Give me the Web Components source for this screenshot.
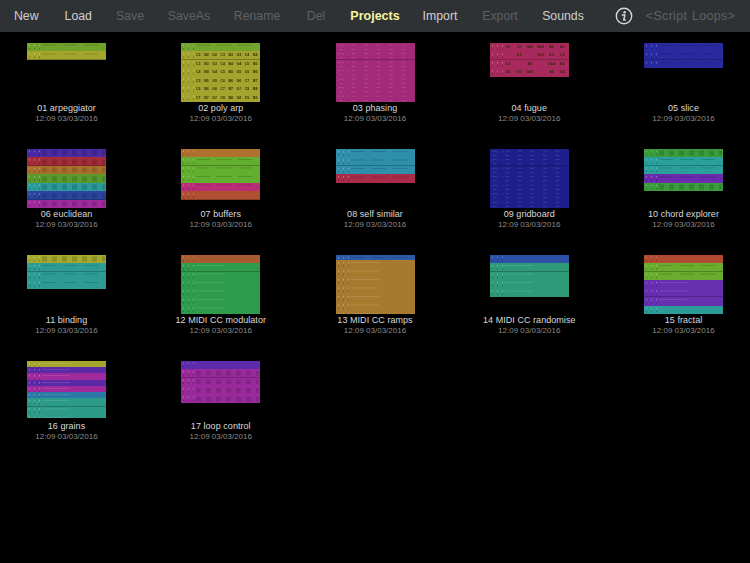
<!DOCTYPE html>
<html>
<head>
<meta charset="utf-8">
<title>Projects</title>
<style>
  html, body { margin: 0; height: 100%; background: #000; overflow: hidden; }
  body { font-family: "Liberation Sans", Arial, sans-serif; }
</style>
</head>
<body>
<tool-bar>
  <nav-button w="52.5">New</nav-button>
  <nav-button w="51.5">Load</nav-button>
  <nav-button w="52" off>Save</nav-button>
  <nav-button w="66" off>SaveAs</nav-button>
  <nav-button w="70" off>Rename</nav-button>
  <nav-button w="48" off>Del</nav-button>
  <nav-button w="70" on>Projects</nav-button>
  <nav-button w="60">Import</nav-button>
  <nav-button w="60" off>Export</nav-button>
  <nav-button w="66">Sounds</nav-button>
  <nav-button w="56"><info-icon></info-icon></nav-button>
  <nav-button w="29" off big>&lt;Script</nav-button>
  <nav-button w="65" off big>Loops&gt;</nav-button>
</tool-bar>
<project-grid>
  <project-card name="01 arpeggiator">
    <thumb-band color="#6fa32c" rows="1" pattern="dash"></thumb-band>
    <thumb-band color="#a3a52c" rows="1" pattern="dash"></thumb-band>
  </project-card>
  <project-card name="02 poly arp">
    <thumb-band color="#72a52e" rows="1" pattern="dash"></thumb-band>
    <thumb-band color="#a3a32e" rows="6" notes="C2 B2 G2 C3 B3 G3 C4 B4 C3 B3 G3 C4 B4 G4 C5 B5 C4 B4 G4 C5 B5 G5 C6 B6 C5 B5 G5 C6 B6 G6 C7 B7 C6 B6 G6 C7 B7 G7 C8 B8 C7 B7 G7 C8 B8 G8 C9 B9"></thumb-band>
  </project-card>
  <project-card name="03 phasing">
    <thumb-band color="#a32a78" rows="7" pattern="beads"></thumb-band>
  </project-card>
  <project-card name="04 fugue">
    <thumb-band color="#a82a5c" rows="4" notes="G1 C2 Gb2 Gb2 A2 A2 &nbsp; G3 &nbsp; Gb3 E3 C3 C4 &nbsp; A4 &nbsp; Gb4 E4 D5 G5 Gb5 &nbsp; A5 G5"></thumb-band>
  </project-card>
  <project-card name="05 slice">
    <thumb-band color="#2a2aa0" rows="3" pattern="dash"></thumb-band>
  </project-card>

  <project-card name="06 euclidean">
    <thumb-band color="#4a2aa3" rows="1" pattern="blocks"></thumb-band>
    <thumb-band color="#a52c38" rows="1" pattern="blocks"></thumb-band>
    <thumb-band color="#a8702c" rows="1" pattern="blocks"></thumb-band>
    <thumb-band color="#5a9a2c" rows="1" pattern="blocks"></thumb-band>
    <thumb-band color="#2a9a9a" rows="1" pattern="blocks"></thumb-band>
    <thumb-band color="#2a44a0" rows="1" pattern="blocks"></thumb-band>
    <thumb-band color="#a02a9c" rows="1" pattern="blocks"></thumb-band>
  </project-card>
  <project-card name="07 buffers">
    <thumb-band color="#b0702e" rows="1"></thumb-band>
    <thumb-band color="#62ae2e" rows="3" pattern="dash"></thumb-band>
    <thumb-band color="#b82c78" rows="1" pattern="dash"></thumb-band>
    <thumb-band color="#b05032" rows="1"></thumb-band>
  </project-card>
  <project-card name="08 self similar">
    <thumb-band color="#2f8eaa" rows="3" pattern="dash"></thumb-band>
    <thumb-band color="#a82c48" rows="1" pattern="dash"></thumb-band>
  </project-card>
  <project-card name="09 gridboard">
    <thumb-band color="#1e1e8c" rows="7" pattern="beads"></thumb-band>
  </project-card>
  <project-card name="10 chord explorer">
    <thumb-band color="#3a9c3c" rows="1" pattern="blocks"></thumb-band>
    <thumb-band color="#2aa09c" rows="2" pattern="dash"></thumb-band>
    <thumb-band color="#6c2aac" rows="1" pattern="dash"></thumb-band>
    <thumb-band color="#3a9c3c" rows="1" pattern="blocks"></thumb-band>
  </project-card>

  <project-card name="11 binding">
    <thumb-band color="#a6a82e" rows="1" pattern="blocks"></thumb-band>
    <thumb-band color="#2c9c94" rows="3" pattern="dash"></thumb-band>
  </project-card>
  <project-card name="12 MIDI CC modulator">
    <thumb-band color="#a85a30" rows="1"></thumb-band>
    <thumb-band color="#2e9c4c" rows="6" pattern="short"></thumb-band>
  </project-card>
  <project-card name="13 MIDI CC ramps">
    <thumb-band color="#2c5ca6" rows="0.7" pattern="dash"></thumb-band>
    <thumb-band color="#a87a30" rows="6.3" pattern="short"></thumb-band>
  </project-card>
  <project-card name="14 MIDI CC randomise">
    <thumb-band color="#2c50a6" rows="1"></thumb-band>
    <thumb-band color="#2e9a78" rows="4" pattern="short"></thumb-band>
  </project-card>
  <project-card name="15 fractal">
    <thumb-band color="#b04a30" rows="1"></thumb-band>
    <thumb-band color="#6aac2e" rows="2" pattern="dash"></thumb-band>
    <thumb-band color="#6630b0" rows="3" pattern="short"></thumb-band>
    <thumb-band color="#2c9c98" rows="1"></thumb-band>
  </project-card>

  <project-card name="16 grains">
    <thumb-band color="#a6a62e" rows="0.75" pattern="short"></thumb-band>
    <thumb-band color="#5a2aa6" rows="0.75" pattern="short"></thumb-band>
    <thumb-band color="#a02a9c" rows="0.75" pattern="short"></thumb-band>
    <thumb-band color="#5a2aa6" rows="0.75" pattern="short"></thumb-band>
    <thumb-band color="#a02a9c" rows="0.75" pattern="short"></thumb-band>
    <thumb-band color="#2c78a6" rows="0.7" pattern="short"></thumb-band>
    <thumb-band color="#2c9c88" rows="2.35" pattern="short"></thumb-band>
  </project-card>
  <project-card name="17 loop control">
    <thumb-band color="#5c2cac" rows="1"></thumb-band>
    <thumb-band color="#9a2a9c" rows="4" pattern="blocks"></thumb-band>
  </project-card>
</project-grid>

<script>
class ToolBar extends HTMLElement {
  constructor() {
    super();
    this.attachShadow({ mode: "open" }).innerHTML = `
      <style>
        :host { display: flex; height: 32px; background: #2f3234; box-sizing: border-box; }
      </style>
      <slot></slot>`;
  }
}
customElements.define("tool-bar", ToolBar);

class NavButton extends HTMLElement {
  constructor() {
    super();
    this.attachShadow({ mode: "open" }).innerHTML = `
      <style>
        :host {
          display: flex; align-items: center; justify-content: center;
          flex: none; font-size: 12.3px; color: #cfcfcf; white-space: nowrap;
        }
        :host([off]) { color: #5e6163; }
        :host([big]) { font-size: 12.6px; letter-spacing: 0.25px; }
        :host([on]) { color: #f5f5a0; font-weight: bold; font-size: 12.5px; }
      </style>
      <slot></slot>`;
  }
  connectedCallback() {
    this.style.width = this.getAttribute("w") + "px";
  }
}
customElements.define("nav-button", NavButton);

class InfoIcon extends HTMLElement {
  constructor() {
    super();
    this.attachShadow({ mode: "open" }).innerHTML = `
      <style>:host { display: block; width: 18px; height: 18px; }</style>
      <svg width="18" height="18" viewBox="0 0 18 18" fill="none">
        <circle cx="9" cy="9" r="7.7" stroke="#d6d6d6" stroke-width="1.4"/>
        <circle cx="9.6" cy="5.2" r="1.2" fill="#d6d6d6"/>
        <path d="M7.3 8h2.6l-1.2 5h1.5" stroke="#d6d6d6" stroke-width="1.5" stroke-linecap="round" stroke-linejoin="round"/>
      </svg>`;
  }
}
customElements.define("info-icon", InfoIcon);

class ProjectGrid extends HTMLElement {
  constructor() {
    super();
    this.attachShadow({ mode: "open" }).innerHTML = `
      <style>
        :host {
          display: grid; grid-template-columns: repeat(5, 154.25px);
          grid-auto-rows: 106px; justify-content: center;
          padding-top: 10.5px;
        }
      </style>
      <slot></slot>`;
  }
}
customElements.define("project-grid", ProjectGrid);

class ProjectCard extends HTMLElement {
  constructor() {
    super();
    this.attachShadow({ mode: "open" }).innerHTML = `
      <style>
        :host { display: flex; flex-direction: column; align-items: center; }
        .thumb { width: 79px; height: 60px; }
        .bands { display: flex; flex-direction: column; filter: blur(0.5px); }
        .name { font-size: 9px; line-height: 11px; letter-spacing: 0.05px; color: #dadada; white-space: nowrap; }
        .date { font-size: 8px; line-height: 9px; color: #8c8c8c; white-space: nowrap; }
      </style>
      <div class="thumb"><div class="bands"><slot></slot></div></div>
      <div class="name"></div>
      <div class="date">12:09 03/03/2016</div>`;
  }
  connectedCallback() {
    this.shadowRoot.querySelector(".name").textContent = this.getAttribute("name");
  }
}
customElements.define("project-card", ProjectCard);

// one coloured track of a thumbnail, height is given in sequencer rows
class ThumbBand extends HTMLElement {
  constructor() {
    super();
    this.attachShadow({ mode: "open" }).innerHTML = `
      <style>
        :host { display: block; position: relative; }
        .lines, .ticks, .fill { position: absolute; top: 0; bottom: 0; }
        .lines {
          left: 0; right: 0;
          background: repeating-linear-gradient(transparent 0 8px, rgba(0,0,0,.24) 8px 8.5px);
        }
        .ticks {
          left: 0; width: 15px;
          background:
            radial-gradient(circle at 2.5px 2.5px, rgba(255,255,255,.3) 0 .7px, transparent 1px) 0 0 / 5px 8.5px,
            radial-gradient(circle at 2.5px 6px, rgba(0,0,0,.3) 0 .6px, transparent 1px) 0 0 / 5px 8.5px;
        }
        :host([pattern=beads]) .ticks { opacity: .35; }
        .fill { left: 15px; right: 1px; }
        :host([pattern=dash]) .fill {
          background: repeating-linear-gradient(90deg, rgba(0,0,0,.16) 0 14px, transparent 14px 21px);
          mask: linear-gradient(#000 0 1px, transparent 1px) 0 2px / 100% 8.5px;
        }
        :host([pattern=short]) .fill {
          background: linear-gradient(rgba(255,255,255,.12), rgba(255,255,255,.12)) 0 0 / 28px 100% no-repeat;
          mask: linear-gradient(#000 0 1px, transparent 1px) 0 2px / 100% 8.5px;
        }
        :host([pattern=blocks]) .fill {
          background: repeating-linear-gradient(90deg, rgba(0,0,0,.14) 0 5px, transparent 5px 10px);
          mask: linear-gradient(#000 0 5px, transparent 5px) 0 2px / 100% 8.5px;
        }
        :host([pattern=beads]) .fill {
          left: 2px;
          background: radial-gradient(ellipse 1.8px .6px at 3px 2px, rgba(255,255,255,.14) 0 90%, transparent) 0 0 / 12.5px 4.25px;
        }
        .notes {
          position: absolute; inset: 0 1px 0 13px;
          display: grid; grid-auto-rows: 8.5px; align-items: center; justify-items: center;
          font-size: 3.6px; font-weight: bold; color: rgba(40,40,0,.9);
        }
      </style>
      <div class="lines"></div><div class="ticks"></div><div class="fill"></div>
      <div class="notes"></div>`;
  }
  connectedCallback() {
    this.style.background = this.getAttribute("color");
    this.style.height = parseFloat(this.getAttribute("rows")) * 8.5 + "px";
    const notes = this.getAttribute("notes");
    if (notes) {
      const box = this.shadowRoot.querySelector(".notes");
      const list = notes.split(" ");
      const cols = list.length > 30 ? 8 : 6;
      box.style.gridTemplateColumns = `repeat(${cols}, 1fr)`;
      list.forEach(n => {
        const s = document.createElement("span");
        s.textContent = n;
        box.appendChild(s);
      });
    }
  }
}
customElements.define("thumb-band", ThumbBand);
</script>
</body>
</html>
